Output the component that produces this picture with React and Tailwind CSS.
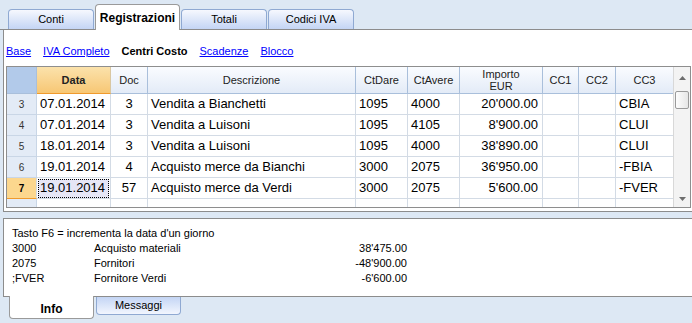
import React from 'react';

const cols = [
  { key: 'n', w: 'w-[30px]' },
  { key: 'data', w: 'w-[74px]' },
  { key: 'doc', w: 'w-[37px]' },
  { key: 'desc', w: 'w-[208px]' },
  { key: 'dare', w: 'w-[52px]' },
  { key: 'avere', w: 'w-[52px]' },
  { key: 'imp', w: 'w-[83px]' },
  { key: 'cc1', w: 'w-[36px]' },
  { key: 'cc2', w: 'w-[37px]' },
  { key: 'cc3', w: 'w-[57px]' },
];

const rows = [
  { n: 3, data: '07.01.2014', doc: '3', desc: 'Vendita a Bianchetti', dare: '1095', avere: '4000', imp: "20'000.00", cc3: 'CBIA' },
  { n: 4, data: '07.01.2014', doc: '3', desc: 'Vendita a Luisoni', dare: '1095', avere: '4105', imp: "8'900.00", cc3: 'CLUI' },
  { n: 5, data: '18.01.2014', doc: '3', desc: 'Vendita a Luisoni', dare: '1095', avere: '4000', imp: "38'890.00", cc3: 'CLUI' },
  { n: 6, data: '19.01.2014', doc: '4', desc: 'Acquisto merce da Bianchi', dare: '3000', avere: '2075', imp: "36'950.00", cc3: '-FBIA' },
  { n: 7, data: '19.01.2014', doc: '57', desc: 'Acquisto merce da Verdi', dare: '3000', avere: '2075', imp: "5'600.00", cc3: '-FVER', sel: true },
];

const tahoma = "font-['Liberation_Sans',Arial,sans-serif]";

function TopTab({ label, active, w }) {
  if (active) {
    return (
      <div className={`${w} relative -mb-px flex h-[26px] items-center justify-center rounded-t-[4px] border border-b-0 border-[#9a9a9a] bg-white text-[12px] font-bold text-black`}>
        {label}
      </div>
    );
  }
  return (
    <div className={`${w} flex h-[20px] items-center justify-center rounded-t-[4px] border border-b-0 border-[#8fa9d2] bg-gradient-to-b from-[#f6f8fe] to-[#c4d5f4] text-[11px] text-black`}>
      {label}
    </div>
  );
}

function HeaderCell({ w, children, orange, corner, last }) {
  let cls = 'border-r border-b border-[#a9bfdb] bg-gradient-to-b from-[#fafcff] to-[#e3ebf7]';
  if (orange) cls = 'border-r border-b border-r-[#d9c7a2] border-b-[#f09a2c] bg-gradient-to-b from-[#fbe2ab] to-[#f7c774] font-bold';
  if (corner) cls = 'border-r border-b border-[#a9bfdb] bg-[#b2caea]';
  return (
    <div className={`${w} ${cls} ${last ? 'border-r-0' : ''} flex h-[27px] flex-col items-center justify-center text-[11px] leading-[12px] text-[#222]`}>
      {children}
    </div>
  );
}

function Row({ r }) {
  const cell = 'h-[21px] border-r border-b border-[#d3dbe5] flex items-center text-[13px] text-black';
  return (
    <div className="flex">
      <div className={`w-[30px] h-[21px] border-r border-b flex items-center justify-center text-[10px] ${r.sel ? 'bg-[#fcd78e] border-b-[#f09a2c] border-r-[#d3dbe5] font-bold text-black' : 'bg-[#e3ebf6] border-[#c9d6e6] text-[#333]'}`}>
        {r.n}
      </div>
      <div className={`w-[74px] ${cell} ${r.sel ? 'pl-[1px]' : 'pl-[3px]'}`}>
        <span className={r.sel ? 'flex h-[19px] w-[71px] items-center border border-dotted border-black bg-[#e6e6f6] pl-[1px]' : ''}>{r.data}</span>
      </div>
      <div className={`w-[37px] ${cell} justify-center`}>{r.doc}</div>
      <div className={`w-[208px] ${cell} pl-[3px]`}>{r.desc}</div>
      <div className={`w-[52px] ${cell} pl-[3px]`}>{r.dare}</div>
      <div className={`w-[52px] ${cell} pl-[3px]`}>{r.avere}</div>
      <div className={`w-[83px] ${cell} justify-end pr-[4px]`}>{r.imp}</div>
      <div className={`w-[36px] ${cell}`}></div>
      <div className={`w-[37px] ${cell}`}></div>
      <div className={`w-[57px] ${cell} border-r-0 pl-[3px]`}>{r.cc3}</div>
    </div>
  );
}

export default function App() {
  return (
    <div className={`${tahoma} flex h-[323px] w-[692px] flex-col overflow-hidden bg-[#dde8f4] text-black`}>
      {/* top tabs */}
      <div className="flex h-[30px] items-end gap-[1px] border-b border-[#8c8c8c] pl-[8px]">
        <TopTab label="Conti" w="w-[86px]" />
        <TopTab label="Registrazioni" w="w-[85px]" active />
        <TopTab label="Totali" w="w-[86px]" />
        <TopTab label="Codici IVA" w="w-[86px]" />
      </div>

      {/* main panel */}
      <div className="ml-[3px] flex h-[182px] flex-col border-b border-l border-[#8c8c8c] bg-white">
        <div className="flex h-[36px] items-center gap-[12px] pl-[2px] pt-[7px] text-[11px]">
          <a className="text-[#0000ff] underline">Base</a>
          <a className="text-[#0000ff] underline">IVA Completo</a>
          <span className="font-bold">Centri Costo</span>
          <a className="text-[#0000ff] underline">Scadenze</a>
          <a className="text-[#0000ff] underline">Blocco</a>
        </div>

        <div className="ml-[2px] flex h-[142px] w-[685px] border border-[#8e8e8e]">
          <div className="flex w-[666px] flex-col">
            <div className="flex">
              <HeaderCell w="w-[30px]" corner />
              <HeaderCell w="w-[74px]" orange>Data</HeaderCell>
              <HeaderCell w="w-[37px]">Doc</HeaderCell>
              <HeaderCell w="w-[208px]">Descrizione</HeaderCell>
              <HeaderCell w="w-[52px]">CtDare</HeaderCell>
              <HeaderCell w="w-[52px]">CtAvere</HeaderCell>
              <HeaderCell w="w-[83px]">
                <span>Importo</span>
                <span>EUR</span>
              </HeaderCell>
              <HeaderCell w="w-[36px]">CC1</HeaderCell>
              <HeaderCell w="w-[37px]">CC2</HeaderCell>
              <HeaderCell w="w-[57px]" last>CC3</HeaderCell>
            </div>
            {rows.map((r) => (
              <Row key={r.n} r={r} />
            ))}
            <div className="flex h-[8px]">
              {cols.map((c, i) => (
                <div
                  key={c.key}
                  className={`${c.w} h-[8px] border-r ${i === 0 ? 'bg-[#e3ebf6] border-[#c9d6e6]' : 'border-[#d3dbe5]'} ${i === cols.length - 1 ? 'border-r-0' : ''}`}
                />
              ))}
            </div>
          </div>

          {/* scrollbar */}
          <div className="flex w-[17px] flex-col border-l border-[#d8d8d8] bg-[#f3f3f3]">
            <div className="flex h-[21px] items-center justify-center">
              <svg width="7" height="4" viewBox="0 0 7 4"><path d="M0 4 L3.5 0 L7 4 Z" fill="#6d6d6d" /></svg>
            </div>
            <div className="mx-[1px] mt-[3px] h-[18px] rounded-[2px] border border-[#9a9a9a] bg-gradient-to-r from-[#fdfdfd] to-[#e6e6e6]" />
            <div className="flex-1" />
            <div className="flex h-[17px] items-center justify-center">
              <svg width="7" height="4" viewBox="0 0 7 4"><path d="M0 0 L3.5 4 L7 0 Z" fill="#6d6d6d" /></svg>
            </div>
          </div>
        </div>
      </div>

      <div className="h-[6px]" />

      {/* info panel */}
      <div className="ml-[3px] h-[79px] border-y border-l border-[#8c8c8c] bg-white pl-[8px] pt-[7px] text-[11px] leading-[15px]">
        <div>Tasto F6 = incrementa la data d'un giorno</div>
        {[
          ['3000', 'Acquisto materiali', "38'475.00"],
          ['2075', 'Fornitori', "-48'900.00"],
          [';FVER', 'Fornitore Verdi', "-6'600.00"],
        ].map(([a, b, c]) => (
          <div key={a} className="flex">
            <span className="w-[82px]">{a}</span>
            <span className="w-[150px]">{b}</span>
            <span className="w-[163px] text-right">{c}</span>
          </div>
        ))}
      </div>

      {/* bottom tabs */}
      <div className="flex items-start gap-[2px] pl-[9px]">
        <div className="relative -mt-px flex h-[23px] w-[85px] items-center justify-center rounded-b-[4px] border border-t-0 border-[#9a9a9a] bg-white pt-[3px] text-[12px] font-bold">
          Info
        </div>
        <div className="flex h-[18px] w-[85px] items-center justify-center rounded-b-[4px] border border-t-0 border-[#8fa9d2] bg-gradient-to-b from-[#c4d5f4] to-[#f2f6fe] text-[11px]">
          Messaggi
        </div>
      </div>
    </div>
  );
}
